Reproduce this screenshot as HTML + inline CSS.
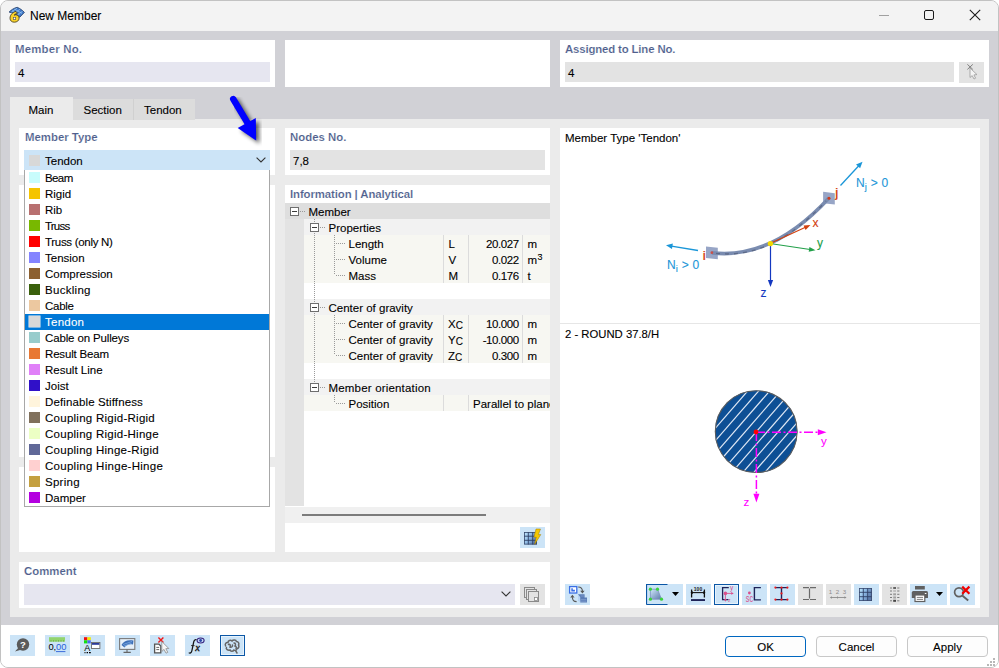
<!DOCTYPE html>
<html><head><meta charset="utf-8"><title>New Member</title>
<style>
html,body{margin:0;padding:0;background:#fff;}
body{width:999px;height:668px;position:relative;overflow:hidden;font-family:'Liberation Sans', sans-serif;}
body div, body svg{position:absolute;}
.t{white-space:nowrap;-webkit-text-stroke:0.1px currentColor;}
sup{font-size:9px;vertical-align:0;position:relative;top:-4px;margin-left:0.5px}
#win{left:0;top:0;width:999px;height:668px;box-sizing:border-box;border:1px solid #c2c2c2;border-radius:8px;background:#f3f3f3;}
.btn{box-sizing:border-box;border-radius:4px;background:#fdfdfd;}
</style></head><body>
<div id="win"></div>
<div style="left:1px;top:1px;width:997px;height:30px;background:#f3f3f3;border-radius:7px 7px 0 0"></div>
<svg style="left:8px;top:6px" width="18" height="18" viewBox="0 0 18 18">
<path d="M1.1 6.1 C3 4 6 2 9.2 1.3 C12 2.5 14.5 4.2 16.4 6.4 L11.8 11.2 C9 9 5 7 1.1 6.1 Z" fill="#3f78c8" stroke="#243c64" stroke-width="0.8"/>
<path d="M4 4.8 L11.5 8.6 M6.6 3.2 L14 7.4 M3.5 5.8 L9 2.2 M6.5 7 L12.2 3.2 M9.5 8.8 L14.6 5.2" stroke="#9ccaf4" stroke-width="0.7"/>
<path d="M8 5.4 C4.8 6 2 8.8 2 12.2 C2 14.8 3.9 16.2 6.3 16.2 C9 16.2 11.1 14.6 11.1 12.2 C11.1 10 9.6 8.8 7.7 8.8 C7.1 8.8 6.6 8.9 6.1 9.2 C6.8 8.2 8 7.6 9.5 7.4 Z" fill="#f8d22c" stroke="#3a3420" stroke-width="0.8"/>
<rect x="5.1" y="11" width="2.8" height="2.8" fill="#5a5a5a"/>
<circle cx="6.5" cy="12.4" r="0.8" fill="#fff"/>
</svg>
<div class="t" style="left:30px;top:8.50px;font-size:12px;line-height:15px;font-weight:400;color:#000;">New Member</div>
<div style="left:879px;top:15px;width:10px;height:1px;background:#a0a0a0;"></div>
<div style="left:924px;top:10px;width:10px;height:10px;background:transparent;border:1px solid #1a1a1a;border-radius:2px;box-sizing:border-box"></div>
<svg style="left:969px;top:9px" width="12" height="12" viewBox="0 0 12 12"><path d="M0.8 0.8 L11.2 11.2 M11.2 0.8 L0.8 11.2" stroke="#1a1a1a" stroke-width="1.1"/></svg>
<div style="left:1px;top:31px;width:997px;height:594px;background:#d1d1d6;"></div>
<div style="left:10px;top:40px;width:265px;height:47px;background:#fff;"></div>
<div class="t" style="left:15px;top:42.00px;font-size:11.4px;line-height:14px;font-weight:700;color:#4f5f8d;-webkit-text-stroke:0.15px #fff;letter-spacing:0.2px">Member No.</div>
<div style="left:15px;top:62px;width:255px;height:20px;background:#e6e6f0;"></div>
<div class="t" style="left:18px;top:66.00px;font-size:11.5px;line-height:14px;font-weight:400;color:#000;">4</div>
<div style="left:285px;top:40px;width:265px;height:47px;background:#fff;"></div>
<div style="left:560px;top:40px;width:429px;height:47px;background:#fff;"></div>
<div class="t" style="left:565px;top:42.00px;font-size:11.4px;line-height:14px;font-weight:700;color:#4f5f8d;-webkit-text-stroke:0.15px #fff;letter-spacing:-0.15px">Assigned to Line No.</div>
<div style="left:565px;top:62px;width:389px;height:20px;background:#e3e3e3;"></div>
<div class="t" style="left:568px;top:66.00px;font-size:11.5px;line-height:14px;font-weight:400;color:#000;">4</div>
<div style="left:959px;top:62px;width:25px;height:21px;background:#e3e3e3;"></div>
<svg style="left:959px;top:62px" width="25" height="21" viewBox="0 0 25 21">
<path d="M8.4 2.4 L13.8 7.4 M13.8 2.4 L8.4 7.4" stroke="#808080" stroke-width="1"/>
<path d="M11 6 L11 15.5 L13.2 13.6 L15 17 L16.6 16.2 L14.9 12.9 L18 12.6 Z" fill="#f4f4f4" stroke="#9a9a9a" stroke-width="0.8"/>
</svg>
<div style="left:10px;top:119px;width:979px;height:498px;background:#ebebeb;"></div>
<div style="left:10px;top:97px;width:63px;height:23px;background:#ebebeb;"></div>
<div style="left:73px;top:99px;width:60px;height:21px;background:#dcdcdc;"></div>
<div style="left:133px;top:99px;width:1px;height:21px;background:#d0d0d0;"></div>
<div style="left:134px;top:99px;width:61px;height:21px;background:#dcdcdc;"></div>
<div class="t" style="left:28.5px;top:103.00px;font-size:11.5px;line-height:14px;font-weight:400;color:#000;">Main</div>
<div class="t" style="left:83.5px;top:103.00px;font-size:11.5px;line-height:14px;font-weight:400;color:#000;">Section</div>
<div class="t" style="left:144px;top:103.00px;font-size:11.5px;line-height:14px;font-weight:400;color:#000;">Tendon</div>
<div style="left:19px;top:128px;width:256px;height:47px;background:#fff;"></div>
<div class="t" style="left:25px;top:130.00px;font-size:11.4px;line-height:14px;font-weight:700;color:#4f5f8d;-webkit-text-stroke:0.15px #fff;">Member Type</div>
<div style="left:19px;top:185px;width:256px;height:272px;background:#fff;"></div>
<div style="left:19px;top:467px;width:256px;height:85px;background:#fff;"></div>
<div style="left:285px;top:128px;width:265px;height:47px;background:#fff;"></div>
<div class="t" style="left:290px;top:130.00px;font-size:11.4px;line-height:14px;font-weight:700;color:#4f5f8d;-webkit-text-stroke:0.15px #fff;">Nodes No.</div>
<div style="left:290px;top:150px;width:255px;height:20px;background:#e3e3e3;"></div>
<div class="t" style="left:293px;top:154.00px;font-size:11.5px;line-height:14px;font-weight:400;color:#000;">7,8</div>
<div style="left:285px;top:185px;width:265px;height:367px;background:#fff;"></div>
<div class="t" style="left:290px;top:187.00px;font-size:11.4px;line-height:14px;font-weight:700;color:#4f5f8d;-webkit-text-stroke:0.15px #fff;letter-spacing:-0.1px">Information | Analytical</div>
<div style="left:285px;top:203px;width:19px;height:303px;background:#e3e3e3;"></div>
<div style="left:285px;top:203px;width:265px;height:16px;background:#dedede;"></div>
<div style="left:304px;top:219px;width:246px;height:16px;background:#f2f2f2;"></div>
<div style="left:304px;top:235px;width:246px;height:16px;background:#f7f7f2;"></div>
<div style="left:304px;top:251px;width:246px;height:16px;background:#f7f7f2;"></div>
<div style="left:304px;top:267px;width:246px;height:16px;background:#f7f7f2;"></div>
<div style="left:304px;top:299px;width:246px;height:16px;background:#f2f2f2;"></div>
<div style="left:304px;top:315px;width:246px;height:16px;background:#f7f7f2;"></div>
<div style="left:304px;top:331px;width:246px;height:16px;background:#f7f7f2;"></div>
<div style="left:304px;top:347px;width:246px;height:16px;background:#f7f7f2;"></div>
<div style="left:304px;top:379px;width:246px;height:16px;background:#f2f2f2;"></div>
<div style="left:304px;top:395px;width:246px;height:16px;background:#f7f7f2;"></div>
<div style="left:290px;top:207px;width:9px;height:9px;box-sizing:border-box;border:1px solid #6e6e6e;background:#fff"></div>
<div style="left:292px;top:211px;width:5px;height:1px;background:#3c3c3c;"></div>
<div style="left:300px;top:211px;width:6px;height:1px;background:repeating-linear-gradient(90deg,#9a9a9a 0 1px,transparent 1px 2px)"></div>
<div class="t" style="left:308.5px;top:205.00px;font-size:11.5px;line-height:14px;font-weight:400;color:#000;">Member</div>
<div style="left:314px;top:219px;width:1px;height:168px;background:repeating-linear-gradient(180deg,#9a9a9a 0 1px,transparent 1px 2px)"></div>
<div style="left:310px;top:223px;width:9px;height:9px;box-sizing:border-box;border:1px solid #6e6e6e;background:#fff"></div>
<div style="left:312px;top:227px;width:5px;height:1px;background:#3c3c3c;"></div>
<div style="left:320px;top:227px;width:6px;height:1px;background:repeating-linear-gradient(90deg,#9a9a9a 0 1px,transparent 1px 2px)"></div>
<div class="t" style="left:328.5px;top:221.00px;font-size:11.5px;line-height:14px;font-weight:400;color:#000;">Properties</div>
<div style="left:334px;top:235px;width:1px;height:40px;background:repeating-linear-gradient(180deg,#9a9a9a 0 1px,transparent 1px 2px)"></div>
<div style="left:336px;top:243px;width:9px;height:1px;background:repeating-linear-gradient(90deg,#9a9a9a 0 1px,transparent 1px 2px)"></div>
<div class="t" style="left:348.5px;top:237.00px;font-size:11.5px;line-height:14px;font-weight:400;color:#000;">Length</div>
<div class="t" style="left:448.5px;top:237.00px;font-size:11.5px;line-height:14px;font-weight:400;color:#000;">L</div>
<div class="t" style="left:430px;top:237.00px;font-size:11.5px;line-height:14px;font-weight:400;color:#000;width:88.6px;text-align:right;letter-spacing:-0.45px">20.027</div>
<div class="t" style="left:527.5px;top:237.00px;font-size:11.5px;line-height:14px;font-weight:400;color:#000;">m</div>
<div style="left:336px;top:259px;width:9px;height:1px;background:repeating-linear-gradient(90deg,#9a9a9a 0 1px,transparent 1px 2px)"></div>
<div class="t" style="left:348.5px;top:253.00px;font-size:11.5px;line-height:14px;font-weight:400;color:#000;">Volume</div>
<div class="t" style="left:448.5px;top:253.00px;font-size:11.5px;line-height:14px;font-weight:400;color:#000;">V</div>
<div class="t" style="left:430px;top:253.00px;font-size:11.5px;line-height:14px;font-weight:400;color:#000;width:88.6px;text-align:right;letter-spacing:-0.45px">0.022</div>
<div class="t" style="left:527.5px;top:253.00px;font-size:11.5px;line-height:14px;font-weight:400;color:#000;">m<sup>3</sup></div>
<div style="left:336px;top:275px;width:9px;height:1px;background:repeating-linear-gradient(90deg,#9a9a9a 0 1px,transparent 1px 2px)"></div>
<div class="t" style="left:348.5px;top:269.00px;font-size:11.5px;line-height:14px;font-weight:400;color:#000;">Mass</div>
<div class="t" style="left:448.5px;top:269.00px;font-size:11.5px;line-height:14px;font-weight:400;color:#000;">M</div>
<div class="t" style="left:430px;top:269.00px;font-size:11.5px;line-height:14px;font-weight:400;color:#000;width:88.6px;text-align:right;letter-spacing:-0.45px">0.176</div>
<div class="t" style="left:527.5px;top:269.00px;font-size:11.5px;line-height:14px;font-weight:400;color:#000;">t</div>
<div style="left:310px;top:303px;width:9px;height:9px;box-sizing:border-box;border:1px solid #6e6e6e;background:#fff"></div>
<div style="left:312px;top:307px;width:5px;height:1px;background:#3c3c3c;"></div>
<div style="left:320px;top:307px;width:6px;height:1px;background:repeating-linear-gradient(90deg,#9a9a9a 0 1px,transparent 1px 2px)"></div>
<div class="t" style="left:328.5px;top:301.00px;font-size:11.5px;line-height:14px;font-weight:400;color:#000;">Center of gravity</div>
<div style="left:334px;top:315px;width:1px;height:40px;background:repeating-linear-gradient(180deg,#9a9a9a 0 1px,transparent 1px 2px)"></div>
<div style="left:336px;top:323px;width:9px;height:1px;background:repeating-linear-gradient(90deg,#9a9a9a 0 1px,transparent 1px 2px)"></div>
<div class="t" style="left:348.5px;top:317.00px;font-size:11.5px;line-height:14px;font-weight:400;color:#000;">Center of gravity</div>
<div class="t" style="left:448px;top:317.00px;font-size:11.5px;line-height:14px;font-weight:400;color:#000;">X<span style="font-size:10px;position:relative;top:1px">C</span></div>
<div class="t" style="left:430px;top:317.00px;font-size:11.5px;line-height:14px;font-weight:400;color:#000;width:88.6px;text-align:right;letter-spacing:-0.45px">10.000</div>
<div class="t" style="left:527.5px;top:317.00px;font-size:11.5px;line-height:14px;font-weight:400;color:#000;">m</div>
<div style="left:336px;top:339px;width:9px;height:1px;background:repeating-linear-gradient(90deg,#9a9a9a 0 1px,transparent 1px 2px)"></div>
<div class="t" style="left:348.5px;top:333.00px;font-size:11.5px;line-height:14px;font-weight:400;color:#000;">Center of gravity</div>
<div class="t" style="left:448px;top:333.00px;font-size:11.5px;line-height:14px;font-weight:400;color:#000;">Y<span style="font-size:10px;position:relative;top:1px">C</span></div>
<div class="t" style="left:430px;top:333.00px;font-size:11.5px;line-height:14px;font-weight:400;color:#000;width:88.6px;text-align:right;letter-spacing:-0.45px">-10.000</div>
<div class="t" style="left:527.5px;top:333.00px;font-size:11.5px;line-height:14px;font-weight:400;color:#000;">m</div>
<div style="left:336px;top:355px;width:9px;height:1px;background:repeating-linear-gradient(90deg,#9a9a9a 0 1px,transparent 1px 2px)"></div>
<div class="t" style="left:348.5px;top:349.00px;font-size:11.5px;line-height:14px;font-weight:400;color:#000;">Center of gravity</div>
<div class="t" style="left:448px;top:349.00px;font-size:11.5px;line-height:14px;font-weight:400;color:#000;">Z<span style="font-size:10px;position:relative;top:1px">C</span></div>
<div class="t" style="left:430px;top:349.00px;font-size:11.5px;line-height:14px;font-weight:400;color:#000;width:88.6px;text-align:right;letter-spacing:-0.45px">0.300</div>
<div class="t" style="left:527.5px;top:349.00px;font-size:11.5px;line-height:14px;font-weight:400;color:#000;">m</div>
<div style="left:310px;top:383px;width:9px;height:9px;box-sizing:border-box;border:1px solid #6e6e6e;background:#fff"></div>
<div style="left:312px;top:387px;width:5px;height:1px;background:#3c3c3c;"></div>
<div style="left:320px;top:387px;width:6px;height:1px;background:repeating-linear-gradient(90deg,#9a9a9a 0 1px,transparent 1px 2px)"></div>
<div class="t" style="left:328.5px;top:381.00px;font-size:11.5px;line-height:14px;font-weight:400;color:#000;letter-spacing:0.18px">Member orientation</div>
<div style="left:334px;top:395px;width:1px;height:8px;background:repeating-linear-gradient(180deg,#9a9a9a 0 1px,transparent 1px 2px)"></div>
<div style="left:336px;top:403px;width:9px;height:1px;background:repeating-linear-gradient(90deg,#9a9a9a 0 1px,transparent 1px 2px)"></div>
<div class="t" style="left:348.5px;top:397.00px;font-size:11.5px;line-height:14px;font-weight:400;color:#000;">Position</div>
<div class="t" style="left:473px;top:397.00px;font-size:11.5px;line-height:14px;font-weight:400;color:#000;width:77px;overflow:hidden;white-space:nowrap">Parallel to plane</div>
<div style="left:443px;top:235px;width:1px;height:48px;background:#dcdcdc;"></div>
<div style="left:468px;top:235px;width:1px;height:48px;background:#dcdcdc;"></div>
<div style="left:522px;top:235px;width:1px;height:48px;background:#dcdcdc;"></div>
<div style="left:443px;top:315px;width:1px;height:48px;background:#dcdcdc;"></div>
<div style="left:468px;top:315px;width:1px;height:48px;background:#dcdcdc;"></div>
<div style="left:522px;top:315px;width:1px;height:48px;background:#dcdcdc;"></div>
<div style="left:443px;top:395px;width:1px;height:16px;background:#dcdcdc;"></div>
<div style="left:468px;top:395px;width:1px;height:16px;background:#dcdcdc;"></div>
<div style="left:285px;top:507px;width:265px;height:16px;background:#f0f0f0;"></div>
<div style="left:302px;top:514px;width:184px;height:2px;background:#7c7c7c;"></div>
<div style="left:520px;top:527px;width:25px;height:21px;background:#cce4f7;"></div>
<svg style="left:520px;top:527px" width="25" height="21" viewBox="0 0 25 21">
<defs><linearGradient id="lg" x1="0" y1="0" x2="1" y2="0.5"><stop offset="0" stop-color="#c8ecff"/><stop offset="0.55" stop-color="#8ab6e2"/><stop offset="1" stop-color="#5a78a8"/></linearGradient></defs>
<rect x="4" y="5" width="13" height="12.5" fill="url(#lg)"/>
<path d="M4 9.2 H17 M4 13.3 H17 M8.3 5 V17.5 M12.7 5 V17.5" stroke="#2e3f64" stroke-width="0.9"/>
<rect x="4.4" y="5.4" width="12.2" height="11.7" fill="none" stroke="#34466a" stroke-width="0.8"/>
<path d="M16 2 L20.5 2 L18.4 7.6 L20.8 7.6 L14.6 17.4 L16.2 10.2 L13.9 10.2 Z" fill="#f5c800" stroke="#a07800" stroke-width="0.5"/>
</svg>
<div style="left:19px;top:562px;width:531px;height:46px;background:#fff;"></div>
<div class="t" style="left:24px;top:564.00px;font-size:11.4px;line-height:14px;font-weight:700;color:#4f5f8d;-webkit-text-stroke:0.15px #fff;">Comment</div>
<div style="left:24px;top:584px;width:491px;height:21px;background:#e6e6f0;"></div>
<svg style="left:501px;top:591px" width="10" height="6" viewBox="0 0 10 6"><path d="M0.6 0.6 L5 5 L9.4 0.6" stroke="#333" stroke-width="1.1" fill="none"/></svg>
<div style="left:520px;top:584px;width:25px;height:21px;background:#e3e3e3;"></div>
<svg style="left:520px;top:584px" width="25" height="21" viewBox="0 0 25 21">
<rect x="4.5" y="3.5" width="10" height="10" fill="#e3e3e3" stroke="#8a8a8a"/>
<rect x="6.5" y="5.5" width="10" height="10" fill="#e3e3e3" stroke="#8a8a8a"/>
<rect x="8.5" y="7.5" width="10" height="10" fill="#e3e3e3" stroke="#8a8a8a"/>
<rect x="14.5" y="13.5" width="3" height="3" fill="#fff" stroke="#8a8a8a" stroke-width="0.8"/>
</svg>
<div style="left:560px;top:128px;width:420px;height:480px;background:#fff;"></div>
<div class="t" style="left:565px;top:131.00px;font-size:11.5px;line-height:14px;font-weight:400;color:#000;">Member Type 'Tendon'</div>
<div style="left:560px;top:323px;width:420px;height:1px;background:#e6e6e6;"></div>
<div class="t" style="left:565px;top:326.50px;font-size:11.3px;line-height:14px;font-weight:400;color:#000;">2 - ROUND 37.8/H</div>
<svg style="left:560px;top:128px" width="420" height="195" viewBox="560 128 420 195"><line x1="698.00" y1="250.50" x2="671.43" y2="246.18" stroke="#1a96d8" stroke-width="1.3"/><path d="M666.00 245.30 L672.86 243.58 L671.97 249.11 Z" fill="#1a96d8"/><line x1="840.50" y1="185.50" x2="858.77" y2="165.74" stroke="#1a96d8" stroke-width="1.3"/><path d="M862.50 161.70 L860.14 168.37 L856.03 164.57 Z" fill="#1a96d8"/><path d="M706 246.6 L717.8 247.8 L717.8 259.2 L706 258 Z" fill="#97a5c6"/><path d="M823.1 191.8 L834.8 193.2 L834.8 204.6 L823.1 203.2 Z" fill="#97a5c6"/><path d="M712 252.8 Q772 260 829 198" stroke="#7a8cb0" stroke-width="3.7" fill="none"/><path d="M716 253.3 Q772 260 826 201" stroke="#56627e" stroke-width="1.3" fill="none" stroke-dasharray="4 5" opacity="0.8"/><circle cx="711.9" cy="252.7" r="1.4" fill="#c8504a"/><circle cx="829" cy="198.2" r="1.5" fill="#d03a1a"/><line x1="770.50" y1="243.50" x2="770.50" y2="281.00" stroke="#1438c0" stroke-width="1.2"/><path d="M770.50 287.00 L767.90 280.00 L773.10 280.00 Z" fill="#1438c0"/><line x1="770.00" y1="243.50" x2="805.50" y2="227.29" stroke="#d2400e" stroke-width="1.2"/><path d="M810.50 225.00 L805.58 229.88 L803.59 225.52 Z" fill="#d2400e"/><line x1="770.00" y1="243.50" x2="810.06" y2="249.49" stroke="#22a04a" stroke-width="1.2"/><path d="M815.50 250.30 L808.72 251.71 L809.43 246.97 Z" fill="#22a04a"/><circle cx="770.4" cy="243.6" r="2.7" fill="#f5d800"/></svg>
<div class="t" style="left:702.5px;top:248.00px;font-size:12.5px;line-height:16px;font-weight:700;color:#d2400e;-webkit-text-stroke:0.15px #fff;">i</div>
<div class="t" style="left:835px;top:185.00px;font-size:12.5px;line-height:16px;font-weight:700;color:#d2400e;-webkit-text-stroke:0.15px #fff;">j</div>
<div class="t" style="left:812.5px;top:216.00px;font-size:12px;line-height:15px;font-weight:400;color:#d2400e;">x</div>
<div class="t" style="left:817px;top:235.70px;font-size:12px;line-height:15px;font-weight:400;color:#22a04a;">y</div>
<div class="t" style="left:760.5px;top:286.00px;font-size:12px;line-height:15px;font-weight:400;color:#1438c0;">z</div>
<div class="t" style="left:667px;top:257.50px;font-size:12px;line-height:15px;font-weight:400;color:#1a96d8;word-spacing:0.5px">N<span style="font-size:9.5px;position:relative;top:3px">i</span> &gt; 0</div>
<div class="t" style="left:856px;top:175.50px;font-size:12px;line-height:15px;font-weight:400;color:#1a96d8;word-spacing:0.5px">N<span style="font-size:9.5px;position:relative;top:3px">j</span> &gt; 0</div>
<svg style="left:560px;top:324px" width="420" height="250" viewBox="560 324 420 250"><defs><clipPath id="cc"><circle cx="756.2" cy="431.6" r="41.2"/></clipPath></defs><circle cx="756.2" cy="431.6" r="41.2" fill="#0d4f95"/><g clip-path="url(#cc)" stroke="#dfe8f5" stroke-width="1.2"><line x1="666.52" y1="433.72" x2="745.25" y2="343.16"/><line x1="672.79" y1="439.17" x2="751.51" y2="348.60"/><line x1="679.05" y1="444.61" x2="757.78" y2="354.05"/><line x1="685.32" y1="450.06" x2="764.04" y2="359.49"/><line x1="691.58" y1="455.50" x2="770.31" y2="364.94"/><line x1="697.84" y1="460.95" x2="776.57" y2="370.38"/><line x1="704.11" y1="466.39" x2="782.84" y2="375.83"/><line x1="710.37" y1="471.84" x2="789.10" y2="381.27"/><line x1="716.64" y1="477.28" x2="795.36" y2="386.72"/><line x1="722.90" y1="482.73" x2="801.63" y2="392.16"/><line x1="729.16" y1="488.17" x2="807.89" y2="397.61"/><line x1="735.43" y1="493.62" x2="814.16" y2="403.05"/><line x1="741.69" y1="499.06" x2="820.42" y2="408.50"/><line x1="747.96" y1="504.51" x2="826.68" y2="413.94"/><line x1="754.22" y1="509.95" x2="832.95" y2="419.39"/><line x1="760.49" y1="515.40" x2="839.21" y2="424.83"/><line x1="766.75" y1="520.84" x2="845.48" y2="430.28"/></g><circle cx="756.2" cy="431.6" r="40.900000000000006" fill="none" stroke="#5c5c5c" stroke-width="1.1"/><line x1="756.00" y1="432.30" x2="818.80" y2="432.30" stroke="#ff00ff" stroke-width="1.5" stroke-dasharray="9 2.5 2 2.5"/><path d="M826.50 432.30 L817.80 435.30 L817.80 429.30 Z" fill="#ff00ff"/><line x1="756.40" y1="432.00" x2="756.40" y2="494.80" stroke="#ff00ff" stroke-width="1.5" stroke-dasharray="9 2.5 2 2.5"/><path d="M756.40 502.50 L753.40 493.80 L759.40 493.80 Z" fill="#ff00ff"/><circle cx="756" cy="432" r="2.4" fill="#ff0000"/></svg>
<div class="t" style="left:821px;top:433.50px;font-size:11.5px;line-height:14px;font-weight:400;color:#ff00ff;">y</div>
<div class="t" style="left:743.5px;top:495.00px;font-size:11.5px;line-height:14px;font-weight:400;color:#ff00ff;">z</div>
<div style="left:565px;top:584px;width:25px;height:21px;background:#cce4f7;box-sizing:border-box;"></div>
<svg style="left:565px;top:584px" width="25" height="21" viewBox="0 0 25 21"><rect x="4.6" y="2.6" width="7.2" height="6.4" fill="#fff" stroke="#3a6fe6" stroke-width="1.3"/><path d="M6.3 4.3 H7.8 V5.8 H9.9 V7.4 H6.3 Z" fill="#3a6fe6"/><path d="M13.2 3 C15.8 3 17.4 4.8 17.4 7.2" stroke="#585858" stroke-width="1.1" fill="none"/><path d="M15.2 6.8 L19.6 6.8 L17.4 9.6 Z" fill="#585858"/><path d="M11.6 17.6 C9 17.6 7.4 15.6 7.4 13.2" stroke="#585858" stroke-width="1.1" fill="none"/><path d="M5.2 13.6 L9.6 13.6 L7.4 10.8 Z" fill="#585858"/><path d="M13 10.2 L19.6 10.2 L19.6 13.4 L22 13.4 L22 18.6 L15.2 18.6 L15.2 16.6 L13 16.6 Z" fill="#5b7db6"/><path d="M13 10.2 L13 16.6 L15.2 18.6 L15.2 13 Z" fill="#b8d4f4"/><path d="M15.6 12 H19 M15.6 15.6 H21.4 M15.6 17.2 H21.4" stroke="#8eaad6" stroke-width="0.6"/></svg>
<div style="left:646px;top:584px;width:37px;height:21px;background:#cce4f7;box-sizing:border-box;"></div>
<svg style="left:646px;top:584px" width="37" height="21" viewBox="0 0 37 21"><defs><linearGradient id="tg" x1="0" y1="0" x2="1" y2="1"><stop offset="0" stop-color="#cfe8fb"/><stop offset="1" stop-color="#5c79aa"/></linearGradient></defs><path d="M0.5 20.5 V0.5 H21.5 M0.5 20.5 H21.5" stroke="#0b57a6" stroke-width="1.2" fill="none"/><path d="M4.4 5.2 L11.5 5.2 L15.5 15.2 L4.4 15.2 Z" fill="url(#tg)" stroke="#7890bc" stroke-width="0.8"/><circle cx="4.4" cy="5.2" r="1.6" fill="#3ad23a"/><circle cx="11.5" cy="5.2" r="1.6" fill="#3ad23a"/><circle cx="15.5" cy="15.2" r="1.6" fill="#3ad23a"/><circle cx="4.4" cy="15.2" r="1.6" fill="#3ad23a"/><path d="M26 8 L33 8 L29.5 12 Z" fill="#000"/></svg>
<div style="left:686px;top:584px;width:25px;height:21px;background:#cce4f7;box-sizing:border-box;"></div>
<svg style="left:686px;top:584px" width="25" height="21" viewBox="0 0 25 21"><path d="M5.6 5.6 V13.4 M18.4 5.6 V13.4" stroke="#111" stroke-width="1.3"/><path d="M5.6 8.6 H18.4" stroke="#111" stroke-width="1.1"/><path d="M4.4 8.6 L7 7.2 L7 10 Z M19.6 8.6 L17 7.2 L17 10 Z" fill="#111"/><text x="12" y="6.9" font-size="5" font-weight="bold" text-anchor="middle" font-family="Liberation Sans" fill="#222">100</text><rect x="5" y="15.1" width="14" height="1.9" fill="#1f2358"/></svg>
<div style="left:714px;top:584px;width:25px;height:21px;background:#cce4f7;box-sizing:border-box;"></div>
<svg style="left:714px;top:584px" width="25" height="21" viewBox="0 0 25 21"><path d="M14.8 3.6 H8.6 V15.6 H14.4" stroke="#1f2358" stroke-width="1.3" fill="none"/><path d="M11.4 9.4 H18.6 M11.4 9.4 V16.6" stroke="#d8508c" stroke-width="0.9"/><path d="M19.8 9.4 L17.2 8 L17.2 10.8 Z M11.4 17.8 L10 15.2 L12.8 15.2 Z" fill="#d8508c"/><circle cx="11.4" cy="9.4" r="1.8" fill="#d8508c"/><text x="16" y="6.4" font-size="6.5" fill="#d8508c" font-family="Liberation Sans">y</text><text x="14" y="18.4" font-size="5" fill="#d8508c" font-family="Liberation Sans">z</text></svg>
<div style="left:714px;top:584px;width:25px;height:21px;box-sizing:border-box;border:1px solid #0b57a6;box-shadow:inset 0 0 0 1px #e6f2fc"></div>
<div style="left:742px;top:584px;width:25px;height:21px;background:#cce4f7;box-sizing:border-box;"></div>
<svg style="left:742px;top:584px" width="25" height="21" viewBox="0 0 25 21"><path d="M18.9 3.6 H12.4 V15.9 H18.9" stroke="#1f2358" stroke-width="1.4" fill="none"/><circle cx="7.4" cy="9" r="1.4" fill="#d8508c"/><text x="3.8" y="18" font-size="10.5" textLength="7.2" lengthAdjust="spacingAndGlyphs" fill="#d8508c" font-family="Liberation Sans">sc</text></svg>
<div style="left:770px;top:584px;width:25px;height:21px;background:#cce4f7;box-sizing:border-box;"></div>
<svg style="left:770px;top:584px" width="25" height="21" viewBox="0 0 25 21"><path d="M5.4 3.6 H17.4 M5.4 15.6 H17.4 M11.5 3.6 V15.6" stroke="#1f2358" stroke-width="1.4"/><circle cx="5.4" cy="3.6" r="1.1" fill="#f01818"/><circle cx="11.5" cy="3.6" r="1.1" fill="#f01818"/><circle cx="17.4" cy="3.6" r="1.1" fill="#f01818"/><circle cx="5.4" cy="15.6" r="1.1" fill="#f01818"/><circle cx="11.5" cy="15.6" r="1.1" fill="#f01818"/><circle cx="17.4" cy="15.6" r="1.1" fill="#f01818"/><circle cx="11.5" cy="9.4" r="1.1" fill="#f01818"/></svg>
<div style="left:798px;top:584px;width:25px;height:21px;background:#e3e3e3;box-sizing:border-box;"></div>
<svg style="left:798px;top:584px" width="25" height="21" viewBox="0 0 25 21"><path d="M5 3.6 H11 M12 3.6 H18 M5 15.5 H11 M12 15.5 H18 M11.5 4.6 V14.6" stroke="#6a6a6a" stroke-width="1.2"/></svg>
<div style="left:826px;top:584px;width:25px;height:21px;background:#e3e3e3;box-sizing:border-box;"></div>
<svg style="left:826px;top:584px" width="25" height="21" viewBox="0 0 25 21"><text x="4.5" y="9.6" font-size="6.2" fill="#8c8c8c" text-anchor="middle" font-family="Liberation Sans">1</text><text x="11.5" y="9.6" font-size="6.2" fill="#8c8c8c" text-anchor="middle" font-family="Liberation Sans">2</text><text x="18.5" y="9.6" font-size="6.2" fill="#8c8c8c" text-anchor="middle" font-family="Liberation Sans">3</text><path d="M5 13.5 H19.5 M11.5 12.5 V14.5" stroke="#8c8c8c" stroke-width="0.9"/><path d="M3.8 13.5 L6 12.2 L6 14.8 Z M20.6 13.5 L18.4 12.2 L18.4 14.8 Z" fill="#8c8c8c"/></svg>
<div style="left:854px;top:584px;width:25px;height:21px;background:#cce4f7;box-sizing:border-box;"></div>
<svg style="left:854px;top:584px" width="25" height="21" viewBox="0 0 25 21"><defs><linearGradient id="gg" x1="0" y1="0" x2="1" y2="0.4"><stop offset="0" stop-color="#c4ecff"/><stop offset="0.5" stop-color="#8cb8e4"/><stop offset="1" stop-color="#5a78a8"/></linearGradient></defs><rect x="5" y="4" width="13" height="13" fill="url(#gg)"/><path d="M5 8.3 H18 M5 12.7 H18 M9.3 4 V17 M13.7 4 V17" stroke="#2e3f64" stroke-width="0.9"/><rect x="5.4" y="4.4" width="12.2" height="12.2" fill="none" stroke="#3a4a70" stroke-width="0.8"/></svg>
<div style="left:882px;top:584px;width:25px;height:21px;background:#e3e3e3;box-sizing:border-box;"></div>
<svg style="left:882px;top:584px" width="25" height="21" viewBox="0 0 25 21"><rect x="11.2" y="3" width="2.8" height="2" fill="#666"/><rect x="11.2" y="6" width="2.8" height="2" fill="#c0c0c0"/><rect x="11.2" y="9.3" width="2.8" height="2" fill="#a0a0a0"/><rect x="11.2" y="12.5" width="2.8" height="2" fill="#a0a0a0"/><rect x="11.2" y="15.8" width="2.8" height="2" fill="#444"/><path d="M8 4 H10 M8 7 H10 M8 10.3 H10 M8 13.5 H10 M8 16.8 H10 M15.2 4 H17.4 M15.2 7 H17.4 M15.2 10.3 H17.4 M15.2 13.5 H17.4 M15.2 16.8 H17.4" stroke="#707070" stroke-width="0.9"/></svg>
<div style="left:910px;top:584px;width:37px;height:21px;background:#cce4f7;box-sizing:border-box;"></div>
<svg style="left:910px;top:584px" width="37" height="21" viewBox="0 0 37 21"><rect x="5" y="2" width="9.8" height="3.5" fill="#606060"/><path d="M1.8 8.5 Q1.8 7 3.3 7 H16.5 Q18 7 18 8.5 V14 H1.8 Z" fill="#606060"/><rect x="5" y="11" width="9.8" height="6.5" fill="#fff" stroke="#606060" stroke-width="1.2"/><path d="M6.8 13.4 H13 M6.8 15.4 H13" stroke="#606060" stroke-width="0.8"/><rect x="14.8" y="9" width="1.6" height="1" fill="#fff"/><path d="M26 8 L33 8 L29.5 12 Z" fill="#000"/></svg>
<div style="left:950px;top:584px;width:25px;height:21px;background:#cce4f7;box-sizing:border-box;"></div>
<svg style="left:950px;top:584px" width="25" height="21" viewBox="0 0 25 21"><circle cx="9" cy="8.2" r="4.4" stroke="#616161" stroke-width="1.7" fill="none"/><path d="M12.2 11.6 L18.2 16.6" stroke="#616161" stroke-width="1.9"/><path d="M12.2 2.6 L19.4 9.8 M19.4 2.6 L12.2 9.8" stroke="#f00000" stroke-width="2.2"/></svg>
<div style="left:24px;top:150px;width:246px;height:20px;background:#cce4f7;"></div>
<div style="left:29px;top:155px;width:11px;height:11px;background:#d8d8d8;"></div>
<div class="t" style="left:45px;top:154.00px;font-size:11.5px;line-height:14px;font-weight:400;color:#000;">Tendon</div>
<svg style="left:256px;top:157px" width="10" height="6" viewBox="0 0 10 6"><path d="M0.6 0.6 L5 5 L9.4 0.6" stroke="#333" stroke-width="1.1" fill="none"/></svg>
<div style="left:24px;top:170px;width:246px;height:337px;box-sizing:border-box;border:1px solid #a8a8a8;border-top:none;background:#fff"></div>
<div style="left:29px;top:172px;width:11px;height:11px;background:#c8fcfc;"></div>
<div class="t" style="left:45px;top:171.00px;font-size:11.5px;line-height:14px;font-weight:400;color:#000;letter-spacing:-0.60px">Beam</div>
<div style="left:29px;top:188px;width:11px;height:11px;background:#f5c400;"></div>
<div class="t" style="left:45px;top:187.00px;font-size:11.5px;line-height:14px;font-weight:400;color:#000;">Rigid</div>
<div style="left:29px;top:204px;width:11px;height:11px;background:#b87070;"></div>
<div class="t" style="left:45px;top:203.00px;font-size:11.5px;line-height:14px;font-weight:400;color:#000;">Rib</div>
<div style="left:29px;top:220px;width:11px;height:11px;background:#78b800;"></div>
<div class="t" style="left:45px;top:219.00px;font-size:11.5px;line-height:14px;font-weight:400;color:#000;letter-spacing:-0.78px">Truss</div>
<div style="left:29px;top:236px;width:11px;height:11px;background:#ff0000;"></div>
<div class="t" style="left:45px;top:235.00px;font-size:11.5px;line-height:14px;font-weight:400;color:#000;letter-spacing:-0.30px">Truss (only N)</div>
<div style="left:29px;top:252px;width:11px;height:11px;background:#8484ff;"></div>
<div class="t" style="left:45px;top:251.00px;font-size:11.5px;line-height:14px;font-weight:400;color:#000;">Tension</div>
<div style="left:29px;top:268px;width:11px;height:11px;background:#8c6030;"></div>
<div class="t" style="left:45px;top:267.00px;font-size:11.5px;line-height:14px;font-weight:400;color:#000;">Compression</div>
<div style="left:29px;top:284px;width:11px;height:11px;background:#3a600c;"></div>
<div class="t" style="left:45px;top:283.00px;font-size:11.5px;line-height:14px;font-weight:400;color:#000;letter-spacing:0.29px">Buckling</div>
<div style="left:29px;top:300px;width:11px;height:11px;background:#ecc8a0;"></div>
<div class="t" style="left:45px;top:299.00px;font-size:11.5px;line-height:14px;font-weight:400;color:#000;letter-spacing:-0.28px">Cable</div>
<div style="left:25px;top:314px;width:244px;height:16px;background:#0078d7;"></div>
<div style="left:29px;top:316px;width:11px;height:11px;background:#d8d8d8;box-shadow:0 0 0 0.5px #f0f0f0"></div>
<div class="t" style="left:45px;top:315.00px;font-size:11.5px;line-height:14px;font-weight:400;color:#fff;letter-spacing:0.24px">Tendon</div>
<div style="left:29px;top:332px;width:11px;height:11px;background:#98cccc;"></div>
<div class="t" style="left:45px;top:331.00px;font-size:11.5px;line-height:14px;font-weight:400;color:#000;letter-spacing:-0.14px">Cable on Pulleys</div>
<div style="left:29px;top:348px;width:11px;height:11px;background:#e87834;"></div>
<div class="t" style="left:45px;top:347.00px;font-size:11.5px;line-height:14px;font-weight:400;color:#000;letter-spacing:-0.17px">Result Beam</div>
<div style="left:29px;top:364px;width:11px;height:11px;background:#e080f8;"></div>
<div class="t" style="left:45px;top:363.00px;font-size:11.5px;line-height:14px;font-weight:400;color:#000;">Result Line</div>
<div style="left:29px;top:380px;width:11px;height:11px;background:#3010c8;"></div>
<div class="t" style="left:45px;top:379.00px;font-size:11.5px;line-height:14px;font-weight:400;color:#000;">Joist</div>
<div style="left:29px;top:396px;width:11px;height:11px;background:#fff4dc;"></div>
<div class="t" style="left:45px;top:395.00px;font-size:11.5px;line-height:14px;font-weight:400;color:#000;letter-spacing:0.12px">Definable Stiffness</div>
<div style="left:29px;top:412px;width:11px;height:11px;background:#80705c;"></div>
<div class="t" style="left:45px;top:411.00px;font-size:11.5px;line-height:14px;font-weight:400;color:#000;letter-spacing:0.26px">Coupling Rigid-Rigid</div>
<div style="left:29px;top:428px;width:11px;height:11px;background:#ecffc4;"></div>
<div class="t" style="left:45px;top:427.00px;font-size:11.5px;line-height:14px;font-weight:400;color:#000;letter-spacing:0.26px">Coupling Rigid-Hinge</div>
<div style="left:29px;top:444px;width:11px;height:11px;background:#606898;"></div>
<div class="t" style="left:45px;top:443.00px;font-size:11.5px;line-height:14px;font-weight:400;color:#000;letter-spacing:0.26px">Coupling Hinge-Rigid</div>
<div style="left:29px;top:460px;width:11px;height:11px;background:#ffd0d0;"></div>
<div class="t" style="left:45px;top:459.00px;font-size:11.5px;line-height:14px;font-weight:400;color:#000;letter-spacing:0.28px">Coupling Hinge-Hinge</div>
<div style="left:29px;top:476px;width:11px;height:11px;background:#c4a040;"></div>
<div class="t" style="left:45px;top:475.00px;font-size:11.5px;line-height:14px;font-weight:400;color:#000;letter-spacing:0.26px">Spring</div>
<div style="left:29px;top:492px;width:11px;height:11px;background:#b400e0;"></div>
<div class="t" style="left:45px;top:491.00px;font-size:11.5px;line-height:14px;font-weight:400;color:#000;">Damper</div>
<svg style="left:210px;top:88px" width="70" height="66" viewBox="210 88 70 66">
<defs><filter id="sh" x="-50%%" y="-50%%" width="200%%" height="200%%"><feGaussianBlur stdDeviation="2"/></filter></defs>
<g transform="translate(3.2 2.8)" opacity="0.62" filter="url(#sh)">
<path d="M233.2 99 L250 127" stroke="#000" stroke-width="6.4" stroke-linecap="round"/>
<path d="M237.7 128 L255.8 118 L256.2 140.6 Z" fill="#000"/></g>
<path d="M233.2 99 L250 127" stroke="#0000ff" stroke-width="6.4" stroke-linecap="round"/>
<path d="M237.7 128 L255.8 118 L256.2 140.6 Z" fill="#0000ff"/>
</svg>
<div style="left:1px;top:625px;width:997px;height:42px;background:#ffffff;border-radius:0 0 7px 7px"></div>
<div style="left:10px;top:635px;width:25px;height:21px;background:#cce4f7;box-sizing:border-box;"></div>
<svg style="left:10px;top:635px" width="25" height="21" viewBox="0 0 25 21"><circle cx="13" cy="9.5" r="6.2" fill="#5a5a5a"/><path d="M8.6 12.6 L5 16.6 L11 14.8 Z" fill="#5a5a5a"/><text x="13" y="13" font-size="9.5" font-weight="bold" fill="#fff" text-anchor="middle" font-family="Liberation Sans">?</text></svg>
<div style="left:45px;top:635px;width:25px;height:21px;background:#cce4f7;box-sizing:border-box;"></div>
<svg style="left:45px;top:635px" width="25" height="21" viewBox="0 0 25 21"><rect x="4" y="2.2" width="16" height="4.5" fill="#92d46e"/><path d="M6 5 V6.7 M8.5 5 V6.7 M11 5 V6.7 M13.5 5 V6.7 M16 5 V6.7 M18.5 5 V6.7" stroke="#6aa84a" stroke-width="0.7"/><text x="3.4" y="15.2" font-size="9.4" fill="#000" font-family="Liberation Sans">0,</text><text x="11" y="15.2" font-size="9.4" fill="#2a5ed8" font-family="Liberation Sans">00</text><path d="M11 16.6 H20.4" stroke="#2a5ed8" stroke-width="0.9"/></svg>
<div style="left:80px;top:635px;width:25px;height:21px;background:#cce4f7;box-sizing:border-box;"></div>
<svg style="left:80px;top:635px" width="25" height="21" viewBox="0 0 25 21"><rect x="4" y="2.2" width="3.4" height="3.1" fill="#f01010"/><rect x="7.4" y="2.2" width="3.4" height="3.1" fill="#f0e800"/><rect x="4" y="5.3" width="3.4" height="3.1" fill="#10e010"/><rect x="7.4" y="5.3" width="3.4" height="3.1" fill="#4a6af0"/><text x="4.2" y="15.6" font-size="9" fill="#000" font-family="Liberation Sans">A</text><path d="M4.5 17.6 H5.5 M6.6 17.6 H8 M9 17.6 H10.8" stroke="#000" stroke-width="1.1"/><rect x="11.5" y="7.5" width="8.4" height="6" fill="#fff" stroke="#6a6a6a" stroke-width="0.9"/><rect x="12" y="8" width="7.4" height="1.8" fill="#2a3a9a"/></svg>
<div style="left:115px;top:635px;width:25px;height:21px;background:#cce4f7;box-sizing:border-box;"></div>
<svg style="left:115px;top:635px" width="25" height="21" viewBox="0 0 25 21"><rect x="4.6" y="3.6" width="15.2" height="10.8" fill="#e6f0fa" stroke="#7a7a7a" stroke-width="1.1"/><path d="M6.5 10 C8.5 5.5 13 4.5 18.5 5.5 L18 9.5 C14 8.5 11 10 9.5 12.5 Z" fill="#3d6fb8"/><path d="M8 9.5 L17 6.5 M9 11 L16.5 8.3" stroke="#8ab4e8" stroke-width="0.7"/><path d="M12 14.5 V17 M8.5 17.4 H15.8" stroke="#666" stroke-width="1.1"/></svg>
<div style="left:150px;top:635px;width:25px;height:21px;background:#cce4f7;box-sizing:border-box;"></div>
<svg style="left:150px;top:635px" width="25" height="21" viewBox="0 0 25 21"><path d="M8.4 2.4 L13.4 7.4 M13.4 2.4 L8.4 7.4" stroke="#f01818" stroke-width="1.4"/><path d="M4.6 9.2 H9 L10.8 11 V17.8 H4.6 Z" fill="#fff" stroke="#555" stroke-width="1.3"/><path d="M6.3 12.4 H9.2 M6.3 14.6 H9.2" stroke="#555" stroke-width="0.9"/><path d="M11.8 6.5 L11.8 16.5 L14 14.4 L16 18.2 L17.8 17.3 L15.8 13.7 L18.8 13.5 Z" fill="#f6f6f6" stroke="#8a8a8a" stroke-width="0.8"/></svg>
<div style="left:185px;top:635px;width:25px;height:21px;background:#cce4f7;box-sizing:border-box;"></div>
<svg style="left:185px;top:635px" width="25" height="21" viewBox="0 0 25 21"><path d="M3.8 17.6 C4.8 18.6 6.4 18 6.9 15.6 L8.7 7 C9.1 4.9 10.3 4.2 11.6 4.8" fill="none" stroke="#181818" stroke-width="1.25"/><path d="M6 10.6 H9.6" stroke="#181818" stroke-width="0.8"/><text x="10.2" y="15.8" font-size="10.5" font-style="italic" font-family="Liberation Serif" fill="#181818" stroke="#181818" stroke-width="0.35">x</text><ellipse cx="15.6" cy="5.5" rx="3.5" ry="2.5" fill="#c4d6f4" stroke="#32207c" stroke-width="1.1"/><circle cx="15.6" cy="5.5" r="1.4" fill="#2a48a8"/></svg>
<div style="left:220px;top:635px;width:25px;height:21px;background:#cce4f7;box-sizing:border-box;"></div>
<svg style="left:220px;top:635px" width="25" height="21" viewBox="0 0 25 21"><g fill="none" stroke="#656565" stroke-width="1.5" stroke-linecap="round"><path d="M5.6 11 C4.6 9 6 7.2 8 7.6 C8 5.6 10.5 4.6 12 6 C13 4.6 16 4.6 16.5 6.6 C18.5 6.6 19.5 8.6 18.5 10 C19.5 11.6 18.5 13.6 17 13.6 C17 15 15.5 16 14 15 C13 16.6 10.5 16.6 10 15 C8 16 5.5 14 6.5 12.5"/><path d="M8.5 9.5 C10 9 11 10.5 10 12 C11.5 12.5 13 11.5 12.5 10 M14 8 C15.5 8 16 9.5 15 11 C16 11.5 17 12.5 16 13.5"/><path d="M15.6 15.6 L17 18"/></g></svg>
<div style="left:220px;top:635px;width:25px;height:21px;box-sizing:border-box;border:1px solid #0b57a6;box-shadow:inset 0 0 0 1px #e6f2fc"></div>
<div class="btn" style="left:725px;top:636px;width:81px;height:21px;border:1.5px solid #0067c0"></div>
<div class="btn" style="left:816px;top:636px;width:81px;height:21px;border:1px solid #c8c8c8"></div>
<div class="btn" style="left:907px;top:636px;width:81px;height:21px;border:1px solid #c8c8c8"></div>
<div class="t" style="left:725px;top:640.00px;font-size:11.5px;line-height:14px;font-weight:400;color:#000;width:81px;text-align:center">OK</div>
<div class="t" style="left:816px;top:640.00px;font-size:11.5px;line-height:14px;font-weight:400;color:#000;width:81px;text-align:center">Cancel</div>
<div class="t" style="left:907px;top:640.00px;font-size:11.5px;line-height:14px;font-weight:400;color:#000;width:81px;text-align:center">Apply</div>
<div style="left:993px;top:658px;width:2px;height:2px;background:#b8b8b8;"></div>
<div style="left:990px;top:661px;width:2px;height:2px;background:#b8b8b8;"></div>
<div style="left:993px;top:661px;width:2px;height:2px;background:#b8b8b8;"></div>
<div style="left:987px;top:664px;width:2px;height:2px;background:#b8b8b8;"></div>
<div style="left:990px;top:664px;width:2px;height:2px;background:#b8b8b8;"></div>
<div style="left:993px;top:664px;width:2px;height:2px;background:#b8b8b8;"></div>
</body></html>
